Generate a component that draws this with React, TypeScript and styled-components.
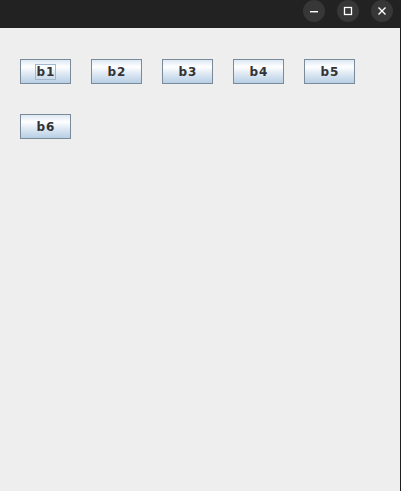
import React from "react";
import styled, { createGlobalStyle } from "styled-components";

const Global = createGlobalStyle`
  html, body { margin: 0; padding: 0; background: #eeeeee; }
  body { width: 401px; height: 491px; overflow: hidden; font-family: "DejaVu Sans", sans-serif; }
`;

const Window = styled.div`
  width: 401px;
  height: 491px;
  display: flex;
  flex-direction: column;
  box-sizing: border-box;
  border-right: 1px solid #1e1e1e;
  background: #eeeeee;
`;

const TitleBar = styled.div`
  height: 28px;
  flex: none;
  background: #222222;
  display: flex;
  align-items: flex-start;
  justify-content: flex-end;
  gap: 12px;
  padding: 0 7px 0 0;
`;

const CtlButton = styled.div`
  width: 22px;
  height: 22px;
  border-radius: 50%;
  background: #373737;
  display: flex;
  align-items: center;
  justify-content: center;
`;

const Content = styled.div`
  flex: 1;
  display: flex;
  flex-wrap: wrap;
  align-content: flex-start;
  column-gap: 20px;
  row-gap: 30px;
  padding: 31px 20px 0 20px;
`;

const Btn = styled.div`
  width: 51px;
  height: 25px;
  box-sizing: border-box;
  border: 1px solid #7a8a99;
  background: linear-gradient(
    to bottom,
    #dde8f3 0%,
    #ffffff 30%,
    #dde8f3 60%,
    #b8cfe5 100%
  );
  display: flex;
  align-items: center;
  justify-content: center;
  font-family: "DejaVu Sans", sans-serif;
  font-weight: bold;
  font-size: 12px;
  letter-spacing: 1px;
  color: #333333;
`;

const Label = styled.span<{ $focused?: boolean }>`
  display: inline-block;
  padding: 0 0 0 1px;
  line-height: 14px;
  border: 1px solid ${(p) => (p.$focused ? "#a3b8cc" : "transparent")};
`;

const Icon = ({ kind }: { kind: "min" | "max" | "close" }) => (
  <svg width="10" height="10" viewBox="0 0 10 10">
    {kind === "min" && <rect x="1" y="5" width="8" height="1.4" fill="#ffffff" />}
    {kind === "max" && (
      <rect x="1.5" y="1.5" width="7" height="7" fill="none" stroke="#ffffff" strokeWidth="1.3" />
    )}
    {kind === "close" && (
      <path d="M1.5 1.5 L8.5 8.5 M8.5 1.5 L1.5 8.5" stroke="#ffffff" strokeWidth="1.4" />
    )}
  </svg>
);

export default function App() {
  const labels = ["b1", "b2", "b3", "b4", "b5", "b6"];
  return (
    <>
      <Global />
      <Window>
        <TitleBar>
          <CtlButton><Icon kind="min" /></CtlButton>
          <CtlButton><Icon kind="max" /></CtlButton>
          <CtlButton><Icon kind="close" /></CtlButton>
        </TitleBar>
        <Content>
          {labels.map((l, i) => (
            <Btn key={l}>
              <Label $focused={i === 0}>{l}</Label>
            </Btn>
          ))}
        </Content>
      </Window>
    </>
  );
}
